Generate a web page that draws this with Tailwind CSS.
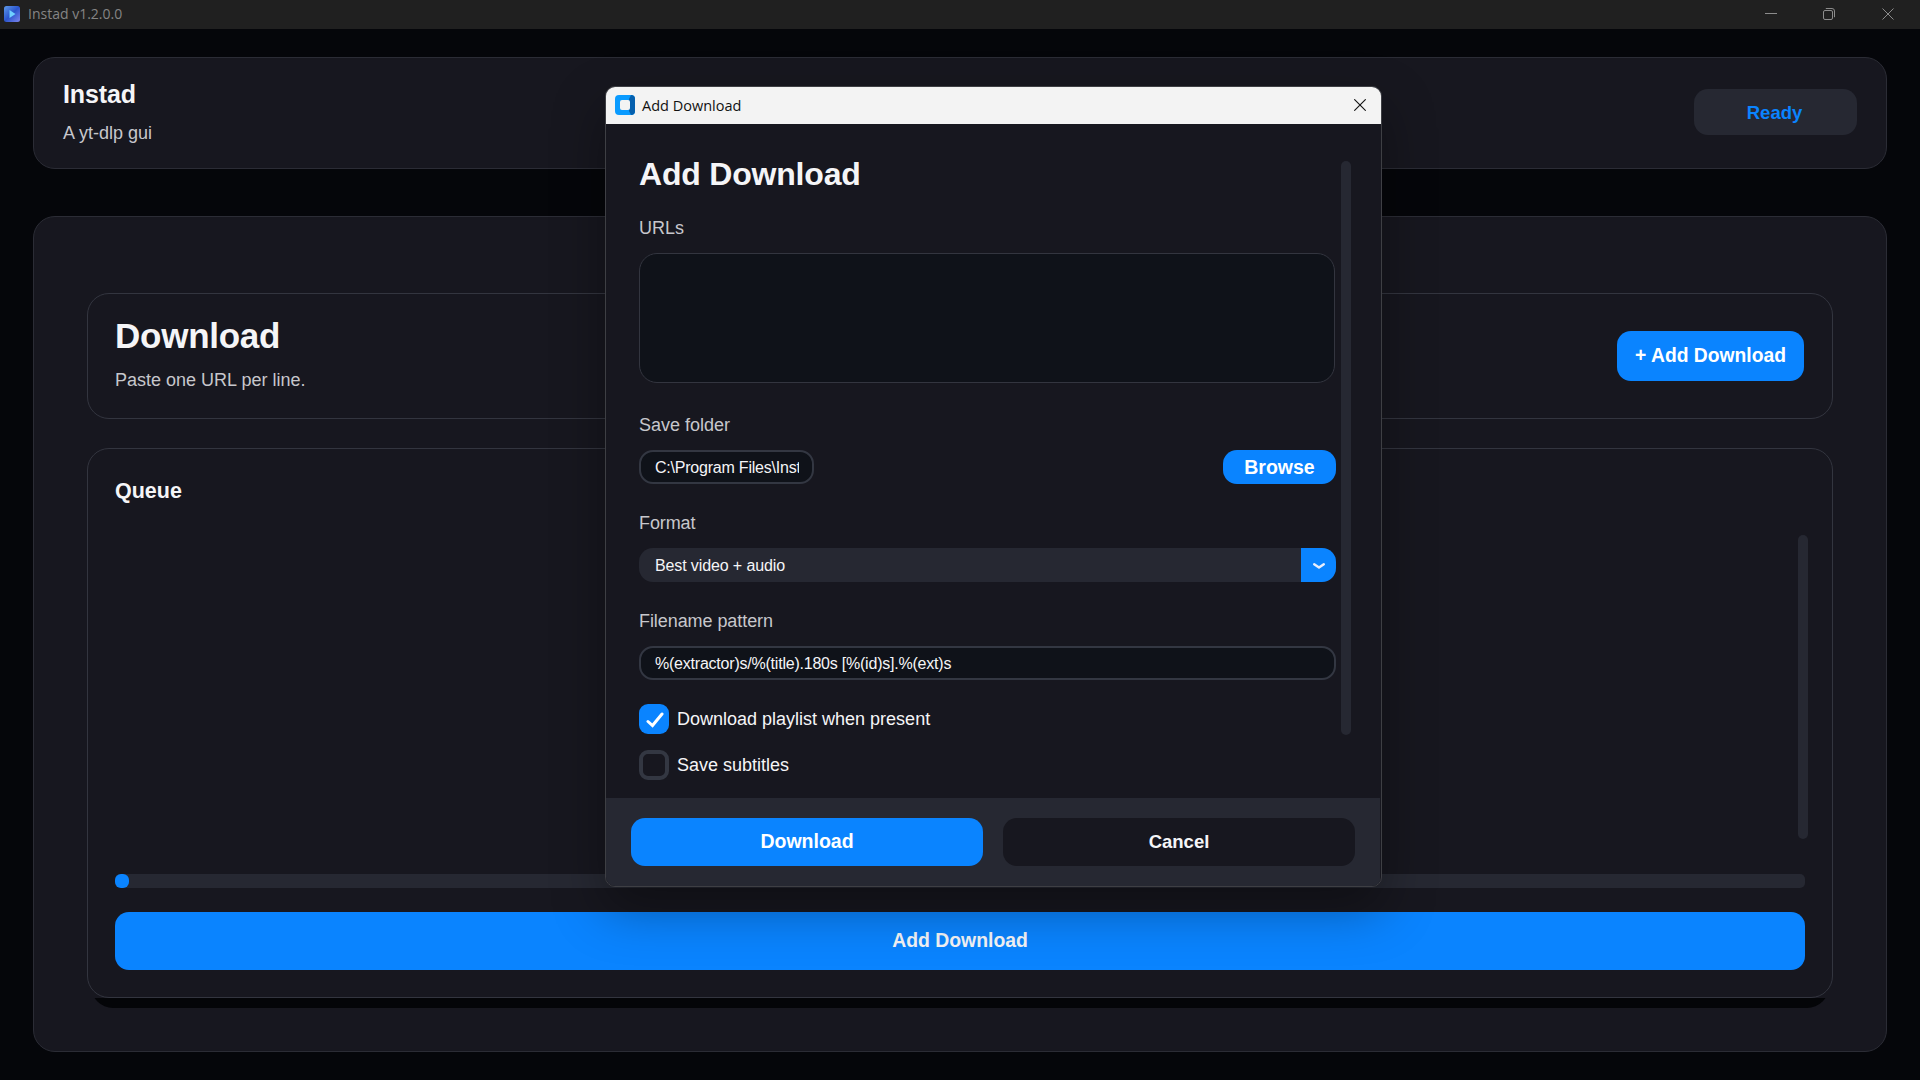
<!DOCTYPE html>
<html lang="en">
<head>
<meta charset="utf-8">
<title>Instad</title>
<script src="https://cdn.jsdelivr.net/npm/@tailwindcss/browser@4"></script>
</head>
<body class="relative flex h-[1080px] w-[1920px] flex-col overflow-hidden bg-[#05060a] font-['Liberation_Sans',Arial,sans-serif] text-[#f5f5f7]">

<!-- Window title bar -->
<header class="flex h-[29px] shrink-0 items-center bg-[#202020] pb-px pl-1">
  <svg class="size-4" viewBox="0 0 16 16">
    <defs><linearGradient id="g" x1="0" y1="0" x2="1" y2="1"><stop offset="0" stop-color="#5f9bea"/><stop offset=".5" stop-color="#2b55cc"/><stop offset="1" stop-color="#7f86ee"/></linearGradient></defs>
    <rect width="16" height="16" rx="2.5" fill="url(#g)"/>
    <path d="M5.500 4v8l6-4z" fill="#6fd0ff"/>
  </svg>
  <span class="ml-2 font-['Open_Sans','Noto_Sans',sans-serif] text-[14px] leading-[18px] text-[#858585]">Instad v1.2.0.0</span>
  <div class="ml-auto flex items-center pr-[26px] text-[#8c8c8c]">
    <svg class="mr-[46px] h-3 w-3" viewBox="0 0 12 12" fill="none" stroke="currentColor"><path d="M0 5.5h12"/></svg>
    <svg class="mr-[47px] h-3 w-3" viewBox="0 0 12 12" fill="none" stroke="currentColor"><rect x=".5" y="2.5" width="9" height="9" rx="1.5"/><path d="M2.8.5h6.2a2.5 2.5 0 0 1 2.5 2.5v6.2"/></svg>
    <svg class="h-3 w-3" viewBox="0 0 12 12" fill="none" stroke="currentColor"><path d="M.5.5l11 11M11.500.5l-11 11"/></svg>
  </div>
</header>

<main class="flex flex-col px-[33px] pt-7">
  <!-- App header card -->
  <section class="flex h-[112px] items-start rounded-[22px] border border-[#2b2c35] bg-[#17171f] pt-[21px] pr-[29px] pl-[29px]">
    <div class="flex flex-col gap-3">
      <h1 class="text-[25px] leading-[30px] font-bold tracking-[-0.1px]">Instad</h1>
      <p class="text-[18px] leading-6 text-[#c7c7cc]">A yt-dlp gui</p>
    </div>
    <div class="mt-2.5 ml-auto flex h-[46px] w-[163px] items-center justify-center rounded-[14px] bg-[#262832] pt-0.5 pr-0.5 text-[18.500px] font-bold text-[#0a84ff]">Ready</div>
  </section>

  <!-- Main panel -->
  <section class="mt-[47px] flex h-[836px] flex-col rounded-[22px] border border-[#2b2c35] bg-[#17171f] px-[53px] pt-[76px]">
    <div class="flex h-[126px] items-start rounded-[22px] border border-[#33353f] pt-[22px] pr-[28px] pl-[27px]">
      <div class="flex flex-col gap-3">
        <h2 class="text-[35px] leading-10 font-bold tracking-[-0.25px]">Download</h2>
        <p class="text-[18px] leading-6 text-[#c7c7cc]">Paste one URL per line.</p>
      </div>
      <button class="mt-[15px] ml-auto h-[50px] w-[187px] rounded-[14px] bg-[#0a84ff] text-[19.300px] font-bold text-white">+ Add Download</button>
    </div>

    <div class="relative mt-[29px] h-[550px]">
      <!-- Drop strip under the queue card -->
      <div class="absolute inset-x-1 top-full h-2.5 overflow-hidden">
        <div class="absolute inset-x-0 bottom-0 h-20 rounded-[22px] bg-[#040508]"></div>
      </div>
      <div class="flex h-full flex-col rounded-[22px] border border-[#33353f] bg-[#17171f] px-[27px] pt-7">
        <h3 class="text-[21.500px] leading-7 font-bold">Queue</h3>
        <div class="-mr-[3px] mt-[30px] h-[304px] w-2.5 self-end rounded-[5px] bg-[#262832]"></div>
        <div class="mt-[35px] h-3.5 rounded-[5px] bg-[#262832]">
          <div class="h-3.5 w-3.5 rounded-[6px] bg-[#0a84ff]"></div>
        </div>
        <button class="mt-6 h-[58px] rounded-[14px] bg-[#0a84ff] text-[19.400px] font-bold">Add Download</button>
      </div>
    </div>
  </section>
</main>

<!-- Add Download dialog -->
<div class="absolute top-[86px] left-[605px] flex h-[801px] w-[777px] flex-col overflow-hidden rounded-[10px] border border-[#3e3f44] bg-[#17171f] shadow-[0_22px_52px_rgba(0,0,0,0.35)]">
  <div class="flex h-[37px] shrink-0 items-center bg-[#f3f3f3] pr-[15px] pb-px pl-[9px] text-[#111]">
    <svg class="size-5" viewBox="0 0 20 20">
      <rect width="20" height="20" rx="4" fill="#0a9bff"/>
      <path d="M14 4l2-4a4 4 0 0 1 4 4v12a4 4 0 0 1-4 4l-2-4z" fill="#0560ae"/>
      <rect x="5" y="5" width="10" height="10" rx="2" fill="#f3f3f3"/>
    </svg>
    <span class="ml-[7px] pt-px font-['Open_Sans','Noto_Sans',sans-serif] text-[14.500px] leading-5">Add Download</span>
    <svg class="ml-auto h-3 w-3" viewBox="0 0 12 12" fill="none" stroke="currentColor" stroke-width="1.1"><path d="M.3.3l11.400 11.400M11.700.3L.3 11.700"/></svg>
  </div>

  <div class="flex h-[674px] shrink-0 pl-[33px]">
    <div class="flex w-[697px] flex-col pt-[30px]">
      <h2 class="text-[32px] leading-10 font-bold tracking-[-0.2px]">Add Download</h2>
      <label class="mt-[22px] text-[18px] leading-6 text-[#c7c7cc]">URLs</label>
      <div class="mt-[13px] mr-px h-[130px] rounded-[18px] border border-[#33353f] bg-[#0f1219]"></div>

      <label class="mt-[30px] text-[18px] leading-6 text-[#c7c7cc]">Save folder</label>
      <div class="mt-[13px] flex justify-between">
        <div class="h-[34px] w-[175px] rounded-[14px] border-2 border-[#333742] bg-[#0f1219] pr-[13px] pl-3.5">
          <div class="overflow-hidden text-[16px] leading-[31px] tracking-[-0.22px] whitespace-nowrap">C:\Program Files\Instad</div>
        </div>
        <button class="h-[34px] w-[113px] rounded-[14px] bg-[#0a84ff] text-[19.500px] leading-[34px] font-bold text-white">Browse</button>
      </div>

      <label class="mt-[27px] text-[18px] leading-6 tracking-[-0.1px] text-[#c7c7cc]">Format</label>
      <div class="mt-[13px] flex h-[34px] overflow-hidden rounded-[14px] bg-[#262832]">
        <span class="grow pl-4 text-[16px] leading-[35px] tracking-[-0.12px]">Best video + audio</span>
        <span class="flex w-[35px] items-center justify-center bg-[#0a84ff]">
          <svg class="mt-0.5 h-2 w-3.5" viewBox="0 0 14 8" fill="none" stroke="#e8eefc" stroke-width="2.400" stroke-linecap="round" stroke-linejoin="round"><path d="M2.200 2.200L7 5.600L11.800 2.200"/></svg>
        </span>
      </div>

      <label class="mt-[27px] text-[18px] leading-6 tracking-[-0.07px] text-[#c7c7cc]">Filename pattern</label>
      <div class="mt-[13px] h-[34px] rounded-[14px] border-2 border-[#333742] bg-[#0f1219] pl-3.5 text-[16px] leading-[31px] tracking-[-0.22px]">%(extractor)s/%(title).180s [%(id)s].%(ext)s</div>

      <div class="mt-6 flex items-center gap-2">
        <span class="flex size-[30px] items-center justify-center rounded-[9px] bg-[#0a84ff]">
          <svg class="mt-px ml-0.5 h-4 w-[18px]" viewBox="0 0 18 16" fill="none" stroke="#fff" stroke-width="3" stroke-linecap="round"><path d="M2 9.500l4.500 4L16 2"/></svg>
        </span>
        <span class="text-[18px] leading-[30px]">Download playlist when present</span>
      </div>
      <div class="mt-4 flex items-center gap-2">
        <span class="size-[30px] rounded-[9px] border-4 border-[#333742]"></span>
        <span class="text-[18px] leading-[30px]">Save subtitles</span>
      </div>
    </div>
    <div class="mt-[37px] ml-[5px] h-[574px] w-2.5 rounded-[5px] bg-[#262832]"></div>
  </div>

  <div class="mr-px flex grow gap-5 bg-[#262832] px-[25px] pt-5">
    <button class="h-12 w-[352px] rounded-[14px] bg-[#0a84ff] text-[19.500px] font-bold text-white">Download</button>
    <button class="h-12 w-[352px] rounded-[14px] bg-[#17171f] text-[18.500px] font-bold">Cancel</button>
  </div>
</div>
</body>
</html>
